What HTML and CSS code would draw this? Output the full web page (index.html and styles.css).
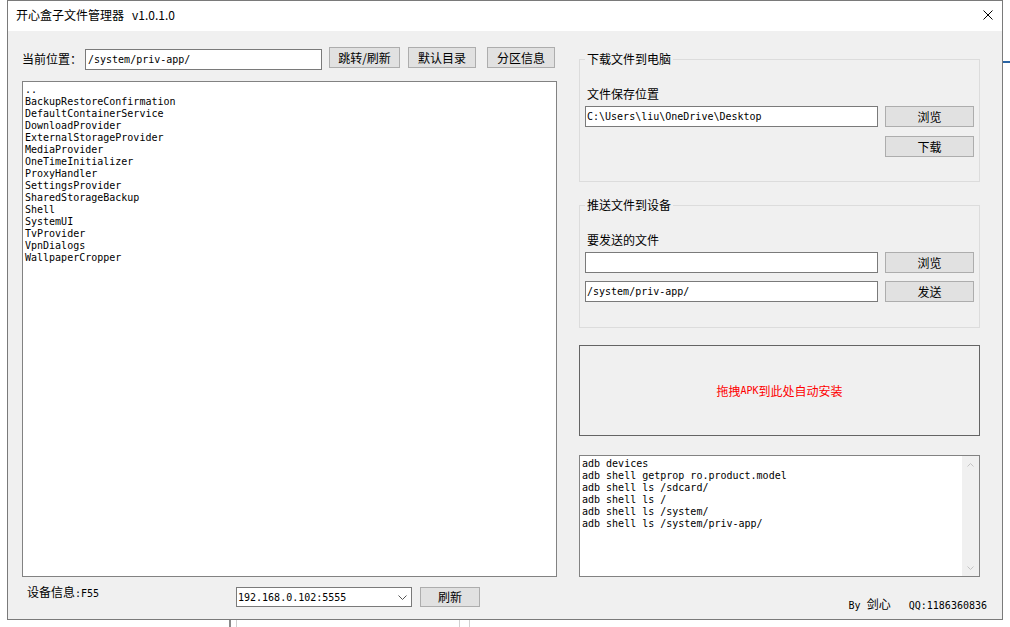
FILE: index.html
```html
<!DOCTYPE html>
<html lang="zh-CN">
<head>
    <meta charset="UTF-8">
    <title>开心盒子文件管理器</title>
    <link rel="stylesheet" href="styles.css">
</head>
<body>
<div class="desktop">
    <!-- bits of the window behind -->
    <div class="behind behind-blue"></div>
    <div class="behind behind-v1"></div>
    <div class="behind behind-v2"></div>
    <div class="behind behind-v3"></div>
    <div class="behind behind-v4"></div>

    <div class="window">
        <div class="titlebar">
            <span class="title">开心盒子文件管理器<span class="ver">v1.0.1.0</span></span>
            <svg class="close" width="10" height="10" viewBox="0 0 10 10"><path d="M0.5 0.5L9.5 9.5M9.5 0.5L0.5 9.5" stroke="#000" stroke-width="1" fill="none"/></svg>
        </div>

        <div class="client">
            <div class="main">
                <!-- 文件列表 -->
                <div class="left">
                    <div class="toolbar">
                        <span class="label">当前位置：</span>
                        <div class="textbox path-box">/system/priv-app/</div>
                        <button class="btn btn-jump">跳转/刷新</button>
                        <button class="btn btn-home">默认目录</button>
                        <button class="btn btn-part">分区信息</button>
                    </div>
                    <div class="listbox">
                        <div>..</div>
                        <div>BackupRestoreConfirmation</div>
                        <div>DefaultContainerService</div>
                        <div>DownloadProvider</div>
                        <div>ExternalStorageProvider</div>
                        <div>MediaProvider</div>
                        <div>OneTimeInitializer</div>
                        <div>ProxyHandler</div>
                        <div>SettingsProvider</div>
                        <div>SharedStorageBackup</div>
                        <div>Shell</div>
                        <div>SystemUI</div>
                        <div>TvProvider</div>
                        <div>VpnDialogs</div>
                        <div>WallpaperCropper</div>
                    </div>
                </div>

                <!-- 右侧操作区 -->
                <div class="right">
                    <fieldset class="group">
                        <legend>下载文件到电脑</legend>
                        <div class="group-label">文件保存位置</div>
                        <div class="row">
                            <div class="textbox">C:\Users\liu\OneDrive\Desktop</div>
                            <button class="btn btn-side">浏览</button>
                        </div>
                        <div class="row row-end">
                            <button class="btn btn-side">下载</button>
                        </div>
                    </fieldset>

                    <fieldset class="group group-push">
                        <legend>推送文件到设备</legend>
                        <div class="group-label">要发送的文件</div>
                        <div class="row">
                            <div class="textbox"></div>
                            <button class="btn btn-side">浏览</button>
                        </div>
                        <div class="row row-second">
                            <div class="textbox">/system/priv-app/</div>
                            <button class="btn btn-side">发送</button>
                        </div>
                    </fieldset>

                    <div class="dropzone">拖拽<span class="mono">APK</span>到此处自动安装</div>

                    <div class="logbox">
                        <div class="log-text">
                            <div>adb devices</div>
                            <div>adb shell getprop ro.product.model</div>
                            <div>adb shell ls /sdcard/</div>
                            <div>adb shell ls /</div>
                            <div>adb shell ls /system/</div>
                            <div>adb shell ls /system/priv-app/</div>
                        </div>
                        <div class="scrollbar">
                            <div class="scroll-arrow"><svg width="7" height="4" viewBox="0 0 7 4"><path d="M0.5 3.5L3.5 0.5L6.5 3.5" stroke="#c4c4c4" fill="none"/></svg></div>
                            <div class="scroll-arrow"><svg width="7" height="4" viewBox="0 0 7 4"><path d="M0.5 0.5L3.5 3.5L6.5 0.5" stroke="#c4c4c4" fill="none"/></svg></div>
                        </div>
                    </div>
                </div>
            </div>

            <!-- 底部状态 -->
            <div class="statusbar">
                <span class="device">设备信息<span class="mono">:F55</span></span>
                <div class="combo">
                    <span>192.168.0.102:5555</span>
                    <svg width="9" height="5" viewBox="0 0 9 5"><path d="M0.5 0.5L4.5 4.5L8.5 0.5" stroke="#555" fill="none"/></svg>
                </div>
                <button class="btn btn-refresh">刷新</button>
                <span class="credit"><span class="mono">By </span>剑心<span class="mono">   QQ:1186360836</span></span>
            </div>
        </div>
    </div>
</div>
</body>
</html>
```

FILE: styles.css
```css
body {
    margin: 0;
    background: #fff;
    font-family: "Noto Sans CJK SC", sans-serif;
    font-size: 12px;
    color: #000;
}
.desktop {
    position: relative;
    width: 1010px;
    height: 627px;
    overflow: hidden;
}
.behind {
    position: absolute;
}
.behind-blue {
    left: 1003px;
    top: 61px;
    width: 7px;
    height: 2px;
    background: #2a64a4;
}
.behind-v1 {
    left: 229px;
    top: 620px;
    width: 2px;
    height: 7px;
    background: #8a8a8a;
}
.behind-v2 {
    left: 236px;
    top: 620px;
    width: 1px;
    height: 7px;
    background: #d0d0d0;
}
.behind-v3 {
    left: 459px;
    top: 620px;
    width: 1px;
    height: 7px;
    background: #d0d0d0;
}
.behind-v4 {
    left: 469px;
    top: 620px;
    width: 1px;
    height: 7px;
    background: #d0d0d0;
}

/* 窗口 */
.window {
    position: relative;
    margin-left: 7px;
    width: 996px;
    height: 620px;
    box-sizing: border-box;
    border: 1px solid #7a7a7a;
    background: #f0f0f0;
    display: flex;
    flex-direction: column;
}
.titlebar {
    height: 30px;
    background: #fff;
    display: flex;
    align-items: center;
    padding: 0 9px 0 8px;
}
.title {
    flex: 1;
    line-height: 16px;
    margin-top: -2px;
}
.ver {
    margin-left: 8px;
}
.close {
    margin-top: -2px;
}
.client {
    flex: 1;
    padding: 0 22px 0 14px;
    display: flex;
    flex-direction: column;
}
.main {
    display: grid;
    grid-template-columns: 535px 401px;
    column-gap: 22px;
    height: 546px;
}

/* 通用控件 */
.mono {
    font-family: "DejaVu Sans Mono", monospace;
    font-size: 10px;
}
.textbox {
    height: 21px;
    box-sizing: border-box;
    border: 1px solid #7a7a7a;
    background: #fff;
    padding-left: 1px;
    font-family: "DejaVu Sans Mono", monospace;
    font-size: 10px;
    line-height: 19px;
    white-space: pre;
    overflow: hidden;
}
.btn {
    height: 21px;
    box-sizing: border-box;
    border: 1px solid #adadad;
    background: #e1e1e1;
    padding: 0;
    font-family: "Noto Sans CJK SC", sans-serif;
    font-size: 12px;
    line-height: 19px;
    color: #000;
}

/* 左侧 */
.left {
    padding-top: 16px;
}
.toolbar {
    display: flex;
    align-items: flex-start;
    height: 23px;
}
.label {
    width: 63px;
    margin-top: 2px;
    line-height: 20px;
}
.path-box {
    width: 237px;
    margin-top: 2px;
    padding-left: 2px;
}
.btn-jump {
    width: 71px;
    margin-left: 7px;
}
.btn-home {
    width: 68px;
    margin-left: 8px;
}
.btn-part {
    width: 68px;
    margin-left: 11px;
}
.listbox {
    margin-top: 11px;
    height: 496px;
    box-sizing: border-box;
    border: 1px solid #828282;
    background: #fff;
    padding: 2px 2px 1px;
    font-family: "DejaVu Sans Mono", monospace;
    font-size: 10px;
    line-height: 12px;
    overflow: hidden;
}

/* 右侧 */
.right {
    padding-top: 20px;
    display: flex;
    flex-direction: column;
}
.group {
    margin: 0;
    min-width: 0;
    padding: 20px 5px 24px;
    border: 1px solid #dcdcdc;
}
.group legend {
    padding: 0 2px;
    font-size: 12px;
    line-height: 16px;
}
.group-label {
    padding-left: 2px;
    line-height: 14px;
}
.row {
    display: flex;
    gap: 7px;
    margin-top: 5px;
}
.row .textbox {
    flex: 1;
}
.row-end {
    justify-content: flex-end;
    margin-top: 9px;
}
.btn-side {
    width: 89px;
}
.group-push {
    margin-top: 15px;
    padding-bottom: 25px;
}
.row-second {
    margin-top: 8px;
}
.dropzone {
    margin-top: 17px;
    height: 91px;
    box-sizing: border-box;
    border: 1px solid #646464;
    display: flex;
    align-items: center;
    justify-content: center;
    color: #f00;
    line-height: 14px;
}
.logbox {
    margin-top: 19px;
    height: 122px;
    box-sizing: border-box;
    border: 1px solid #828282;
    background: #fff;
    display: flex;
    overflow: hidden;
}
.log-text {
    flex: 1;
    padding: 2px 2px 1px;
    font-family: "DejaVu Sans Mono", monospace;
    font-size: 10px;
    line-height: 12px;
}
.scrollbar {
    width: 17px;
    background: #f0f0f0;
    display: flex;
    flex-direction: column;
    justify-content: space-between;
}
.scroll-arrow {
    height: 17px;
    display: flex;
    align-items: center;
    justify-content: center;
}

/* 底部 */
.statusbar {
    display: flex;
    align-items: flex-start;
    padding-top: 10px;
}
.device {
    width: 209px;
    margin-left: 5px;
    margin-top: -2px;
    line-height: 14px;
}
.combo {
    width: 176px;
    height: 20px;
    box-sizing: border-box;
    border: 1px solid #7a7a7a;
    background: #fff;
    display: flex;
    align-items: center;
    justify-content: space-between;
    padding: 0 4px 0 1px;
    font-family: "DejaVu Sans Mono", monospace;
    font-size: 10px;
}
.btn-refresh {
    width: 60px;
    height: 20px;
    margin-left: 8px;
    line-height: 18px;
}
.credit {
    margin-left: auto;
    margin-right: -7px;
    margin-top: 10px;
    line-height: 14px;
    white-space: pre;
}
```
